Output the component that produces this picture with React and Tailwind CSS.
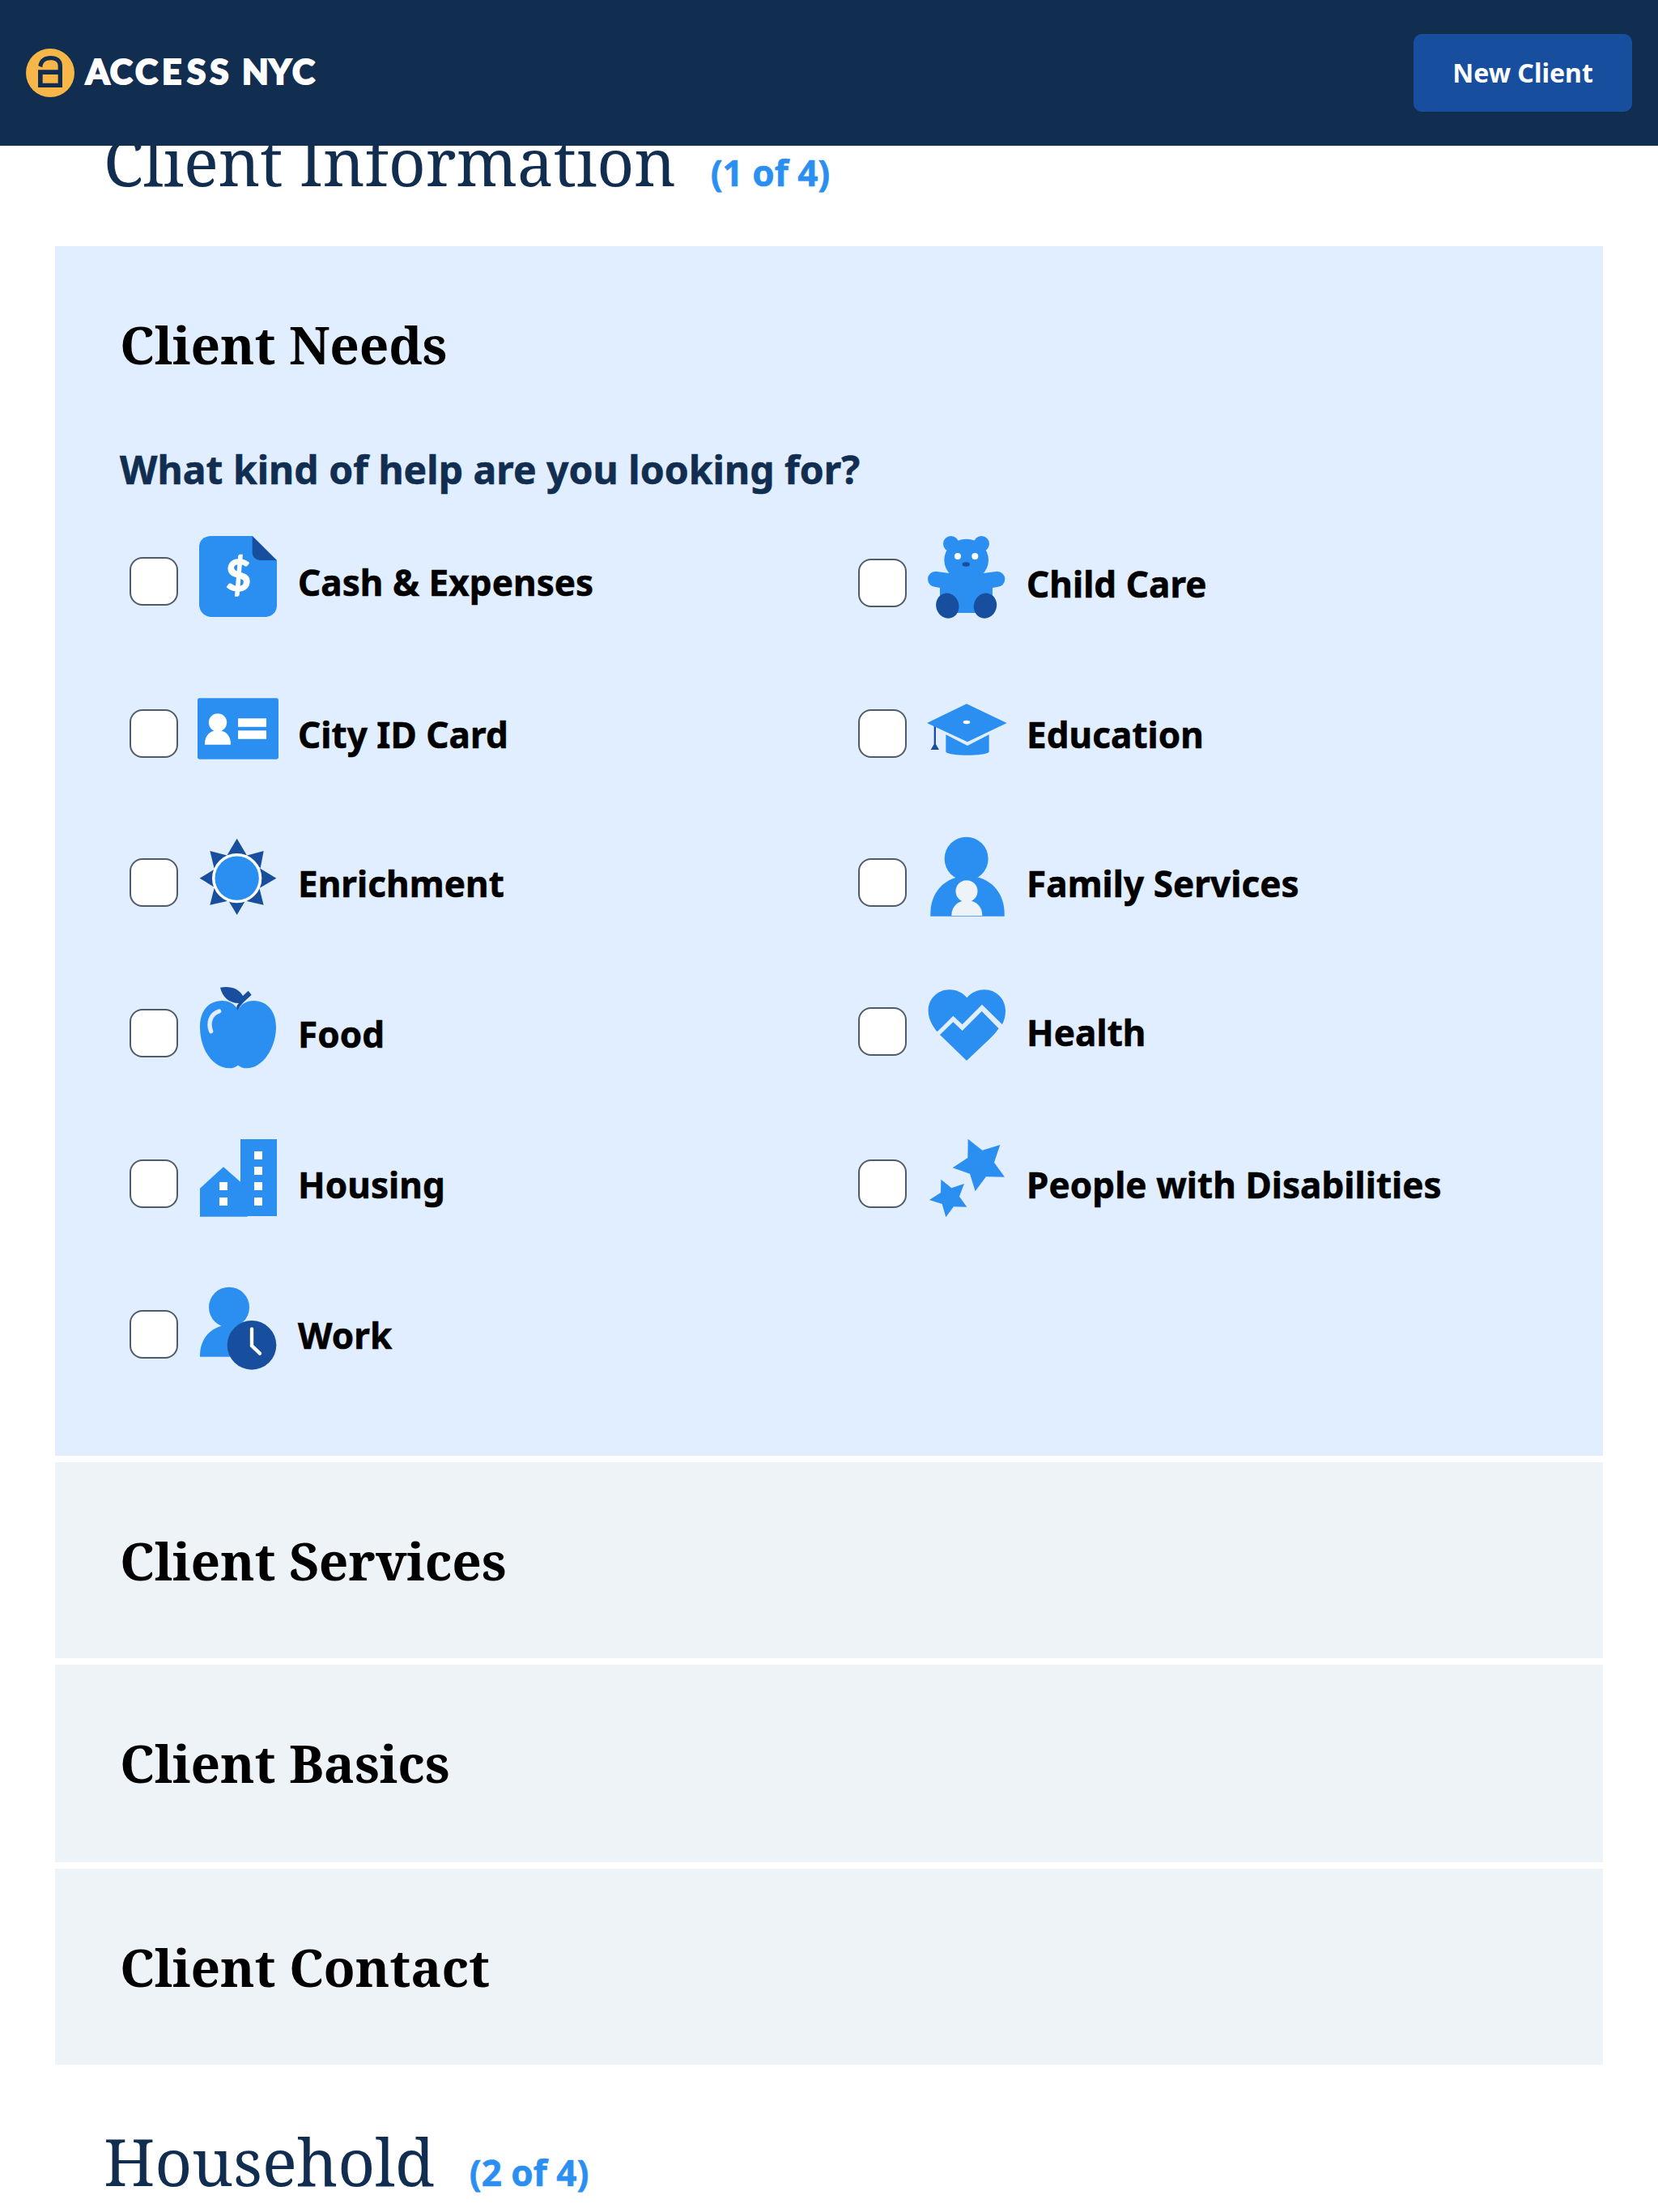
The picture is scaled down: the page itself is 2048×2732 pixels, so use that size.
const BLUE = '#2b8ff2';
const NAVY = '#184e9e';

function Icon({ top, children }) {
  return (
    <svg className="mx-5 h-[120px] w-[108px] shrink-0" viewBox={`300 ${top} 324 360`} fill={BLUE} aria-hidden="true">
      {children}
    </svg>
  );
}

const CashIcon = () => (
  <Icon top={54}>
    <path d="M360 66H515L606 156V324Q604 360 566 366H360Q324 362 318 324V102Q322 70 360 66Z" />
    <path d="M515 66V130Q517 152 543 156H605Z" fill={NAVY} />
    <text
      x="463"
      y="271"
      textAnchor="middle"
      fontSize="162"
      fontWeight="700"
      fill="#fff"
      stroke="#fff"
      strokeWidth="4"
      className="font-['Lato',sans-serif]"
    >
      $
    </text>
  </Icon>
);

const IdIcon = () => (
  <Icon top={618}>
    <rect x="312" y="667" width="300" height="226" rx="7" />
    <g fill="#fff">
      <circle cx="387" cy="757" r="33.5" />
      <path d="M339 839C338 806 358 786 387 786C416 786 436 806 435 839Z" />
      <path d="M462 742H567V773H462ZM462 787H567V818H462Z" />
    </g>
  </Icon>
);

const SunIcon = () => (
  <Icon top={90}>
    <path
      fill={NAVY}
      d="M458 107L422 168H494ZM320 254L374 221V287ZM458 390L426 336H490ZM604 254L541 216V291ZM358 153L424 170L374 218ZM557 153L493 170L545 217ZM358 353L374 290L424 338ZM557 353L541 290L491 338Z"
    />
    <circle cx="458" cy="254" r="92" fill="#fff" />
    <circle cx="458" cy="254" r="81.5" />
  </Icon>
);

const AppleIcon = () => (
  <Icon top={648}>
    <path d="M462 742C450 720 430 708 403 708C350 708 320 750 321 805C321 888 368 958 430 958C443 958 453 954 462 947C471 954 481 958 494 958C556 958 603 880 603 805C603 750 572 708 520 708C493 708 474 720 462 742Z" />
    <path d="M392 747C360 757 350 790 362 821" fill="none" stroke="#e1eeff" strokeWidth="16" strokeLinecap="round" />
    <path
      d="M396 659C435 652 466 664 480 690L500 671L512 686L482 714Q468 728 461 743Q454 735 458 727Q460 722 465 717C428 716 405 695 396 659Z"
      fill={NAVY}
    />
  </Icon>
);

const HousingIcon = () => (
  <Icon top={66}>
    <path d="M471 81H606V366H497V368H321V263L408 184L471 239Z" />
    <path
      fill="#fff"
      d="M522 126h30v30h-30ZM522 183h30v30h-30ZM522 240h30v30h-30ZM522 297h30v30h-30ZM393 240h30v30h-30ZM393 297h30v30h-30Z"
    />
  </Icon>
);

const WorkIcon = () => (
  <Icon top={624}>
    <circle cx="429" cy="704" r="75" />
    <path d="M321 887C319 818 365 771 429 769L500 780V887Z" />
    <circle cx="513" cy="844" r="91" fill={NAVY} />
    <path d="M513 784V846L543 875" fill="none" stroke="#fff" strokeWidth="13" strokeLinecap="round" />
  </Icon>
);

const BearIcon = () => (
  <Icon top={60}>
    <circle cx="404" cy="95" r="29" />
    <circle cx="517" cy="95" r="29" />
    <ellipse cx="461" cy="155" rx="82" ry="78" />
    <path d="M347 197L393 203H529L575 197A29 29 0 0 1 575 255L558 258V351H363V258L347 255A29 29 0 0 1 347 197Z" />
    <circle cx="429" cy="141" r="12" fill="#fff" />
    <circle cx="493" cy="141" r="12" fill="#fff" />
    <g fill={NAVY}>
      <ellipse cx="460" cy="171" rx="14" ry="8" />
      <ellipse cx="391" cy="324.5" rx="42" ry="47" transform="rotate(-18 391 324.5)" />
      <ellipse cx="531" cy="324.5" rx="42" ry="47" transform="rotate(18 531 324.5)" />
    </g>
  </Icon>
);

const GraduationIcon = () => (
  <Icon top={618}>
    <path d="M341 765H348V838L360 858H329L341 838Z" fill={NAVY} />
    <path d="M462 688L611 759L465 829L315 759Z" />
    <path d="M385 802L465 843L545 802V866C530 882 400 882 385 866Z" />
    <ellipse cx="462" cy="756" rx="13" ry="6.5" fill="#fff" />
  </Icon>
);

const FamilyIcon = () => (
  <Icon top={90}>
    <circle cx="461" cy="182" r="81" />
    <path d="M328 395C324 306 382 246 465 246C548 246 606 306 602 395Z" />
    <circle cx="462" cy="302" r="40.5" fill="#edf3f7" />
    <path d="M406 393C406 358 430 337 463 337C497 337 520 358 520 393Z" fill="#edf3f7" />
  </Icon>
);

const HeartIcon = () => (
  <Icon top={642}>
    <path d="M353 823C330 795 320 770 320 745C320 700 355 667 399 667C425 667 447 678 463 697C479 678 502 667 528 667C572 667 606 702 606 745C606 765 602 780 594 796L519 722L446 796L412 764Z" />
    <path d="M363 834L412 787L446 819L518 747L581 811Q566 832 550 847L462 930Z" />
  </Icon>
);

const StarsIcon = () => (
  <Icon top={66}>
    <path d="M467 80L520 122L586 102L564 167L603 221L534 220L494 274L474 209L410 187L466 150Z" />
    <path d="M367 230L406 262L453 246L435 293L463 332L414 331L385 370L371 321L324 306L366 279Z" />
  </Icon>
);

const needs = [
  { label: 'Cash & Expenses', icon: CashIcon },
  { label: 'Child Care', icon: BearIcon, nudge: 'pt-1' },
  { label: 'City ID Card', icon: IdIcon, nudge: 'pt-1' },
  { label: 'Education', icon: GraduationIcon, nudge: 'pt-1' },
  { label: 'Enrichment', icon: SunIcon },
  { label: 'Family Services', icon: FamilyIcon },
  { label: 'Food', icon: AppleIcon },
  { label: 'Health', icon: HeartIcon, nudge: 'pb-1' },
  { label: 'Housing', icon: HousingIcon },
  { label: 'People with Disabilities', icon: StarsIcon },
  { label: 'Work', icon: WorkIcon },
];

function Need({ label, icon: Glyph, nudge = '' }) {
  return (
    <label className={`flex h-[186px] items-center pl-3 ${nudge}`}>
      <input type="checkbox" className="size-[60px] shrink-0 appearance-none rounded-2xl border-2 border-[#4f5b66] bg-white" />
      <Glyph />
      <span className="pt-0.5 text-[44px] leading-[60px] font-bold tracking-[0.06px] whitespace-nowrap text-black [-webkit-text-stroke:0.6px]">
        {label}
      </span>
    </label>
  );
}

function SectionTitle({ title, step, className }) {
  return (
    <div className={`flex items-baseline gap-[43px] pl-32 ${className}`}>
      <h1 className="font-['Noto_Serif',serif] text-[80px] leading-[100px] tracking-[-0.15px] text-[#112e51]">{title}</h1>
      <span className="text-[44px] leading-[60px] font-bold text-[#2b8ff2] [-webkit-text-stroke:0.6px]">{step}</span>
    </div>
  );
}

function CardTitle({ children }) {
  return (
    <h2 className="flex h-[242px] items-center pt-0.5 font-['Noto_Serif',serif] text-[64px] leading-[80px] font-bold tracking-[-0.12px] text-black">
      {children}
    </h2>
  );
}

function Logo() {
  return (
    <svg className="h-[100px] w-[400px]" viewBox="0 0 1200 300">
      <circle cx="126" cy="150" r="90" fill="#f7b748" />
      <path
        fill="#112e51"
        fillRule="evenodd"
        d="M81 139H155V125C155 109 145 103 127 103C109 103 98 112 97 130L82 124C85 98 105 87 127 87C156 87 171 101 171 125V204H81ZM98 156V188H155V156Z"
      />
      <text
        x="257 347 441 540 633 718 800 837 936 1023"
        y="192"
        fontSize="127"
        fontWeight="900"
        fill="#fff"
        stroke="#fff"
        strokeWidth="6"
        className="font-['Lato',sans-serif]"
      >
        ACCESS NYC
      </text>
    </svg>
  );
}

export default function App() {
  return (
    <div className="h-[2732px] w-[2048px] overflow-hidden bg-white font-['Noto_Sans',sans-serif]">
      <header className="relative z-10 flex h-[180px] items-center justify-between bg-[#112e51] pr-8 pl-5">
        <Logo />
        <button className="h-24 w-[270px] rounded-[10px] bg-[#184e9e] text-[32px] leading-[44px] font-bold text-white">
          New Client
        </button>
      </header>

      <main>
        <SectionTitle title="Client Information" step="(1 of 4)" className="-mt-[31px]" />
        <div className="mx-[68px] mt-[55px] flex flex-col gap-2">
          <section className="h-[1494px] bg-[#e1eeff] px-20">
            <CardTitle>Client Needs</CardTitle>
            <p className="mt-1 text-[48px] leading-[60px] font-bold tracking-[0.04px] text-[#112e51] [-webkit-text-stroke:0.6px]">
              What kind of help are you looking for?
            </p>
            <div className="mt-[15px] grid grid-cols-[900px_auto]">
              {needs.map((n) => (
                <Need key={n.label} {...n} />
              ))}
            </div>
          </section>
          <section className="h-[242px] bg-[#edf3f7] px-20">
            <CardTitle>Client Services</CardTitle>
          </section>
          <section className="h-[244px] bg-[#edf3f7] px-20">
            <CardTitle>Client Basics</CardTitle>
          </section>
          <section className="h-[242px] bg-[#edf3f7] px-20">
            <CardTitle>Client Contact</CardTitle>
          </section>
        </div>
        <SectionTitle title="Household" step="(2 of 4)" className="mt-[69px]" />
      </main>
    </div>
  );
}
